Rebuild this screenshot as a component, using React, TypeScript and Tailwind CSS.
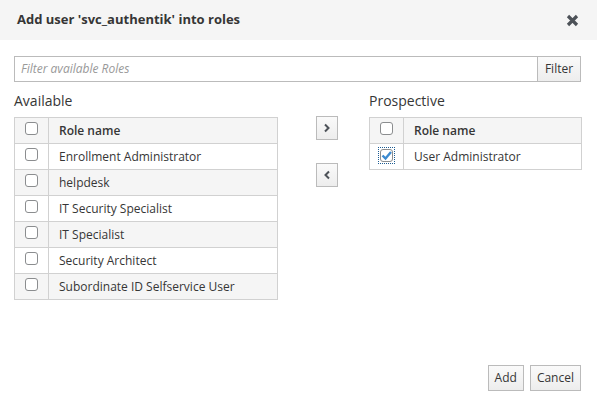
import { useState } from 'react';

const AVAILABLE = [
  'Enrollment Administrator',
  'helpdesk',
  'IT Security Specialist',
  'IT Specialist',
  'Security Architect',
  'Subordinate ID Selfservice User',
];

function Box({ checked = false, focused = false }: { checked?: boolean; focused?: boolean }) {
  return (
    <span
      className={`inline-flex items-center justify-center ${focused ? 'outline-1 outline-dotted outline-[#1d5c93] outline-offset-1' : ''}`}
    >
      <span className="w-[13px] h-[13px] rounded-[3px] border border-[#8b8d8f] bg-white flex items-center justify-center">
        {checked && (
          <svg width="11" height="11" viewBox="0 0 11 11">
            <path d="M1.5 5.5 L4.5 8.5 L10 2" fill="none" stroke="#3b8ad0" strokeWidth="2.4" />
          </svg>
        )}
      </span>
    </span>
  );
}

function RoleTable({ rows, checked }: { rows: string[]; checked?: number }) {
  return (
    <table className="w-full border-collapse text-[12px] text-[#363636]">
      <thead>
        <tr className="bg-[#f5f5f5] h-[26px]">
          <th className="w-[34px] border border-[#d1d1d1] text-center align-middle">
            <Box />
          </th>
          <th className="border border-[#d1d1d1] text-left font-semibold px-[10px]">Role name</th>
        </tr>
      </thead>
      <tbody>
        {rows.map((r, i) => (
          <tr key={r} className={`h-[26px] ${i % 2 === 1 ? 'bg-[#f5f5f5]' : 'bg-white'}`}>
            <td className="border border-[#d1d1d1] text-center align-middle">
              <Box checked={checked === i} focused={checked === i} />
            </td>
            <td className="border border-[#d1d1d1] px-[10px]">{r}</td>
          </tr>
        ))}
      </tbody>
    </table>
  );
}

function MoveButton({ dir }: { dir: 'right' | 'left' }) {
  return (
    <button className="w-[22px] h-[24px] border border-[#bbb] bg-gradient-to-b from-[#fafafa] to-[#ededed] flex items-center justify-center">
      <svg width="8" height="10" viewBox="0 0 8 10">
        <path
          d={dir === 'right' ? 'M2 1.5 L5.5 5 L2 8.5' : 'M6 1.5 L2.5 5 L6 8.5'}
          fill="none"
          stroke="#4d5258"
          strokeWidth="2"
        />
      </svg>
    </button>
  );
}

export default function App() {
  const [filter, setFilter] = useState('');

  return (
    <div className="w-[597px] h-[405px] bg-white flex flex-col font-['Open_Sans',sans-serif] text-[#363636]">
      {/* Header */}
      <div className="h-[40px] bg-[#f5f5f5] flex items-center justify-between pl-[17px] pr-[18px] shrink-0">
        <h4 className="text-[13px] font-bold">Add user 'svc_authentik' into roles</h4>
        <svg width="13" height="13" viewBox="0 0 13 13">
          <path d="M2 2 L11 11 M11 2 L2 11" stroke="#4d5258" strokeWidth="3.2" />
        </svg>
      </div>

      <div className="flex-1 flex flex-col px-[14px] pt-[16px]">
        {/* Filter */}
        <div className="flex h-[26px] mr-[2px]">
          <input
            value={filter}
            onChange={(e) => setFilter(e.target.value)}
            placeholder="Filter available Roles"
            className="flex-1 border border-[#bbb] px-[6px] text-[12px] italic placeholder:text-[#999] outline-none"
          />
          <button className="w-[43px] border border-l-0 border-[#bbb] bg-gradient-to-b from-[#fafafa] to-[#ededed] text-[12px] text-[#363636]">
            Filter
          </button>
        </div>

        <div className="flex mt-[8px]">
          <div className="w-[264px]">
            <div className="text-[14px] h-[22px] leading-[22px] mb-[5px]">Available</div>
            <RoleTable rows={AVAILABLE} />
          </div>
          <div className="w-[91px] flex flex-col items-center pt-[26px] gap-[23px] pl-[6px]">
            <MoveButton dir="right" />
            <MoveButton dir="left" />
          </div>
          <div className="w-[213px]">
            <div className="text-[14px] h-[22px] leading-[22px] mb-[5px]">Prospective</div>
            <RoleTable rows={['User Administrator']} checked={0} />
          </div>
        </div>

        <div className="flex-1" />
        <div className="flex justify-end gap-[6px] mr-[2px] mb-[14px]">
          <button className="h-[26px] px-[6px] border border-[#bbb] bg-gradient-to-b from-[#fafafa] to-[#ededed] text-[12px]">
            Add
          </button>
          <button className="h-[26px] px-[6px] border border-[#bbb] bg-gradient-to-b from-[#fafafa] to-[#ededed] text-[12px]">
            Cancel
          </button>
        </div>
      </div>
    </div>
  );
}
